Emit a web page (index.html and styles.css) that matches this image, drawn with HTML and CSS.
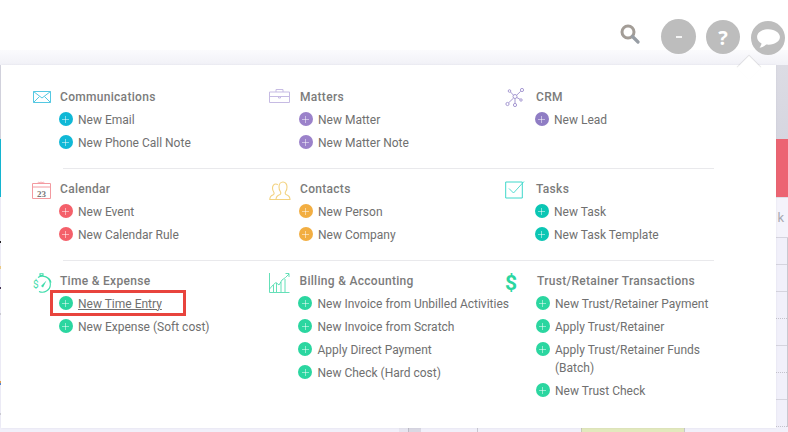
FILE: index.html
```html
<!DOCTYPE html>
<html lang="en">
<head>
<meta charset="utf-8">
<title>Quick add menu</title>
<link rel="stylesheet" href="styles.css">
</head>
<body>
<div class="app">
  <header class="topbar">
    <svg class="search" viewBox="0 0 20 20" width="20" height="20"><circle cx="8" cy="8" r="6" fill="none" stroke="#a39d97" stroke-width="3"/><path d="M12.500 12.500L18 18" stroke="#979da4" stroke-width="3.200" stroke-linecap="round"/></svg>
    <span class="round r-big"><span class="dash"></span></span>
    <span class="round r-help">?</span>
    <span class="round r-chat"><svg viewBox="0 0 26 24" width="27" height="25"><path d="M13 3C6.600 3 2 6.400 2 10.600c0 2.600 1.700 4.800 4.300 6.100-.3 1.500-1.100 3-2 4.300 2.500-.4 4.800-1.700 6.500-3.200 .7.100 1.400.1 2.200.1 6.400 0 11-3.300 11-7.300S19.400 3 13 3z" fill="#fff"/></svg></span>
  </header>
  <div class="fade"></div>
  <div class="band"></div>
  <div class="redrow"></div>
  <div class="toolbar"><span>k</span></div>
  <div class="cal">
    <div class="calrow"></div>
    <div class="calrow"></div>
    <div class="calrow dotted"></div>
    <div class="calrow"></div>
    <div class="calrow dotted"></div>
    <div class="calrow"></div>
    <div class="calrow dotted"></div>
  </div>
  <div class="bottom">
    <span class="c c0"></span><span class="c c1"></span><span class="c c2"></span><span class="c c3"></span><span class="c c4"></span><span class="c c5"></span>
  </div>
  <div class="edge"></div>

  <nav class="menu">
    <span class="caret"></span>

    <section class="row">
      <div class="group cyan">
        <svg class="gi gi-mail" viewBox="0 0 18 12" width="18" height="12"><path d="M.5.500h17v11H.5zM.5.500l8.500 6.500 8.500-6.500M.5 11.500l6-6M17.500 11.500l-6-6" fill="none" stroke="#55c8e2"/></svg>
        <div class="body">
          <h3>Communications</h3>
          <a class="item"><i></i>New Email</a>
          <a class="item"><i></i>New Phone Call Note</a>
        </div>
      </div>
      <div class="group purple">
        <svg class="gi" viewBox="0 0 21 14" width="21" height="14"><path d="M.5 3h20v10.500H.5zM.5 7.500h20M7 3V.5h7V3M9.500 7.500V9h2V7.500" fill="none" stroke="#c6bbe3"/></svg>
        <div class="body">
          <h3>Matters</h3>
          <a class="item"><i></i>New Matter</a>
          <a class="item"><i></i>New Matter Note</a>
        </div>
      </div>
      <div class="group violet">
        <svg class="gi gi-crm" viewBox="0 0 20 20" width="20" height="20"><g fill="none" stroke="#a79ad2"><circle cx="4.500" cy="3" r="1.300"/><circle cx="17" cy="2" r="1.600"/><circle cx="10" cy="8.500" r="2"/><circle cx="2.500" cy="16" r="1.600"/><circle cx="10" cy="17" r="1.600"/><circle cx="16" cy="12" r="1.200"/><path d="M5.500 4l3 3.200M11.500 7.300l4.200-4M8.600 10l-5 4.800M10 10.500V15.400M11.800 9.500l3.200 1.800"/></g></svg>
        <div class="body">
          <h3>CRM</h3>
          <a class="item"><i></i>New Lead</a>
        </div>
      </div>
    </section>

    <hr class="rule">

    <section class="row">
      <div class="group red">
        <svg class="gi" viewBox="0 0 19 18" width="19" height="18"><path d="M.5 2.500h18v15H.5zM.5 6h18" fill="none" stroke="#f39aa0"/><path d="M6 2.500c0-2 1.500-2 1.500 0 0-2 1.500-2 1.500 0 0-2 1.500-2 1.500 0 0-2 1.500-2 1.500 0" fill="none" stroke="#f39aa0" stroke-width=".7"/><text x="9.500" y="15.500" class="daynum">23</text></svg>
        <div class="body">
          <h3>Calendar</h3>
          <a class="item"><i></i>New Event</a>
          <a class="item"><i></i>New Calendar Rule</a>
        </div>
      </div>
      <div class="group amber">
        <svg class="gi" viewBox="0 0 22 20" width="22" height="20"><g fill="none" stroke="#f3d27f" stroke-width="1.100"><path d="M8.500 18.500h12.500c0-3-1-4-4-5-1-.5-1-2-.3-3 .8-1 1.300-2.300 1.300-4.500 0-2.800-1.700-5-4-5s-4 2.200-4 5c0 2.200.5 3.500 1.300 4.500.7 1 .7 2.500-.3 3-3 1-4 2-4 5z"/><path d="M8.500 18.500H.8c0-3 1-4 3.500-4.800 1-.5 1-1.800.4-2.700-.8-1-1.200-2.200-1.200-4C3.500 4.500 5 3 6.800 3c.8 0 1.500.3 2 .7"/></g></svg>
        <div class="body">
          <h3>Contacts</h3>
          <a class="item"><i></i>New Person</a>
          <a class="item"><i></i>New Company</a>
        </div>
      </div>
      <div class="group teal">
        <svg class="gi" viewBox="0 0 20 18" width="20" height="18"><path d="M.7 1h16.600v16H.7z" fill="none" stroke="#3fd8cb" stroke-width="1"/><path d="M4 7.500l4.500 4.500L19 .5" fill="none" stroke="#3fd8cb" stroke-width=".9"/></svg>
        <div class="body">
          <h3>Tasks</h3>
          <a class="item"><i></i>New Task</a>
          <a class="item"><i></i>New Task Template</a>
        </div>
      </div>
    </section>

    <hr class="rule">

    <section class="row row-last">
      <div class="group green">
        <svg class="gi" viewBox="0 0 20 20" width="20" height="20"><g fill="none" stroke="#3fdcab"><path d="M6 4.500A8 8 0 1 1 7 18.500M13.500 3.500c3 1.200 5 3.500 5.500 6M8 2.500h3V.8H8z" stroke-width="1.100"/></g><path d="M9 13l5.500-5.500-3.500 7z" fill="#3fdcab"/><text x="1" y="14.500" class="sign">$</text></svg>
        <div class="body">
          <h3>Time &amp; Expense</h3>
          <a class="item marked"><i></i><u>New Time Entry</u></a>
          <a class="item"><i></i>New Expense (Soft cost)</a>
        </div>
      </div>
      <div class="group green">
        <svg class="gi" viewBox="0 0 21 20" width="21" height="20"><g fill="none" stroke="#53dcb0" stroke-width=".9"><path d="M.5 0v19.500H20.500"/><path d="M.5 16l4-4.500 2.500-2 3 2.500 3-5 3.500-2.500L20 1"/><path d="M16.500.5H20V4M4.500 12v7M7.500 10v9M12 9v10M16 6v13"/></g></svg>
        <div class="body">
          <h3>Billing &amp; Accounting</h3>
          <a class="item"><i></i>New Invoice from Unbilled Activities</a>
          <a class="item"><i></i>New Invoice from Scratch</a>
          <a class="item"><i></i>Apply Direct Payment</a>
          <a class="item"><i></i>New Check (Hard cost)</a>
        </div>
      </div>
      <div class="group green">
        <span class="gi dollar">$</span>
        <div class="body">
          <h3>Trust/Retainer Transactions</h3>
          <a class="item"><i></i>New Trust/Retainer Payment</a>
          <a class="item"><i></i>Apply Trust/Retainer</a>
          <a class="item"><i></i>Apply Trust/Retainer Funds (Batch)</a>
          <a class="item"><i></i>New Trust Check</a>
        </div>
      </div>
    </section>
  </nav>
</div>
</body>
</html>
```
FILE: styles.css
```css
* { box-sizing: border-box; }
html, body { margin: 0; padding: 0; }
body { background: #fff; font-family: Roboto, "Liberation Sans", sans-serif; }

.app { position: relative; width: 788px; height: 432px; overflow: hidden; display: flex; flex-direction: column; }

.topbar { height: 50px; flex: none; background: #fff; position: relative; z-index: 3; display: flex; align-items: flex-start; padding: 19px 0 0 620px; }
.search { margin-top: 5px; margin-right: 21px; flex: none; }
.round { flex: none; display: flex; align-items: center; justify-content: center; border-radius: 50%; background: #bdbdbd; color: #fff; font-weight: 700; }
.r-big { width: 35px; height: 35px; }
.dash { width: 6px; height: 2px; background: #f4f4f4; }
.r-help { width: 34px; height: 34px; margin-left: 10px; margin-top: 1px; font-size: 20px; font-family: "Open Sans", sans-serif; }
.r-chat { width: 34px; height: 34px; margin-left: 11px; margin-top: 2px; }

.fade { height: 15px; flex: none; background: linear-gradient(#fbfbfd, #f1f1f7); }
.band { height: 74px; flex: none; background: linear-gradient(#dcdce4, #d6d6e0); }
.redrow { height: 58px; flex: none; background: #ec6472; }
.toolbar { height: 41px; flex: none; background: #f4f3fb; border-top: 1px solid #e0dfe8; border-bottom: 1px solid #d5d4de; display: flex; justify-content: flex-end; align-items: center; padding: 0 4px 0 0; font-size: 13px; color: #a9a9b0; }
.cal { flex: none; background: #f1f0fa; border-right: 1px solid #c9c8d0; }
.calrow { height: 27px; border-bottom: 1px solid #d5d4de; }
.calrow.dotted { border-bottom: 1px dotted #c4c3cc; }
.bottom { flex: 1; display: flex; background: #f1f0fa; }
.c { display: block; flex: none; height: 100%; }
.c0 { width: 399px; }
.c1 { width: 9px; background: #e6e5f0; }
.c2 { width: 12px; background: #d9d8e3; border-left: 1px solid #bdbcc6; }
.c3 { width: 57px; border-left: 1px solid #d9d8e3; }
.c4 { width: 104px; border-left: 1px solid #c8c7d0; }
.c5 { width: 104px; background: #e2e9bd; border-left: 1px solid #c8c8b8; border-right: 1px solid #c8c8c8; }

.edge { position: absolute; left: 0; top: 65px; width: 1px; height: 367px; background: linear-gradient(#d6d6e0 0 74px, #11b8d4 74px 132px, #f1f0fa 132px 176px, #222 176px 178px, #f1f0fa 178px 201px, #f0cf86 201px 204px, #f1f0fa 204px 222px, #443355 222px 224px, #f1f0fa 224px 248px, #cfcfd6 248px 250px, #f1f0fa 250px 316px, #e2a04a 316px 318px, #5a86d0 318px 320px, #f1f0fa 320px 348px, #cfcfd6 348px 350px, #f1f0fa 350px); }

.menu { position: absolute; z-index: 2; left: 1px; top: 65px; width: 775px; height: 363px; background: #fff; padding: 22px 0 0 31px; box-shadow: 0 0 2px rgba(120,120,140,.12); }
.caret { position: absolute; left: 736px; top: -9px; width: 24px; height: 24px; background: #fff; transform: rotate(45deg) scale(.72); box-shadow: -1px -1px 1px rgba(170,170,170,.35); }

.row { display: grid; grid-template-columns: 237px 236px 240px; }
.row-last { grid-template-columns: 236.500px 237.500px 239px; }
.group { display: flex; position: relative; padding-left: 31px; }
.group:first-child { padding-left: 28px; }
.gi { position: absolute; left: 0; top: 2px; }
.gi-mail { left: 1px; top: 4px; }
.gi-crm { top: 1px; }
.body { min-width: 0; width: 180px; flex: none; }
.group:nth-child(2) .body { width: 215px; }
h3 { margin: 0 0 1px; height: 20px; font-size: 12px; line-height: 20px; font-weight: 500; color: #7b7b7b; letter-spacing: .3px; white-space: nowrap; }
.item { display: flex; position: relative; padding: 2.500px 0 2.500px 19.500px; margin-left: -1.500px; font-size: 12px; line-height: 18px; color: #707070; }
.item i { position: absolute; left: 0; top: 4px; width: 14px; height: 14px; border-radius: 50%; }
.item i::before, .item i::after { content: ""; position: absolute; background: rgba(255,255,255,.5); }
.item i::before { left: 3.500px; right: 3.500px; top: 6.500px; height: 1px; }
.item i::after { top: 3.500px; bottom: 3.500px; left: 6.500px; width: 1px; }

.cyan i { background: #10b8d6; }
.purple i { background: #9b82ca; }
.violet i { background: #8f7dc4; }
.red i { background: #f4606a; }
.amber i { background: #f2ae42; }
.teal i { background: #0bc6b4; }
.green i { background: #2bd6a0; }

.marked::after { content: ""; position: absolute; left: -8.500px; top: -2.500px; width: 130px; height: 20px; border: 3px solid #e8443d; }
u { text-decoration: underline; }

.rule { border: 0; height: 1px; background: #e9e9ec; margin: 14px 0 10px 31px; width: 651px; }
.daynum { font-family: "Liberation Serif", serif; font-size: 9px; font-weight: 700; fill: #777; text-anchor: middle; }
.sign { font-family: Roboto, sans-serif; font-size: 10px; fill: #3fdcab; }
.dollar { left: -1px; top: 0; font-size: 21px; font-weight: 700; color: #2bd6a0; line-height: 24px; }
```
